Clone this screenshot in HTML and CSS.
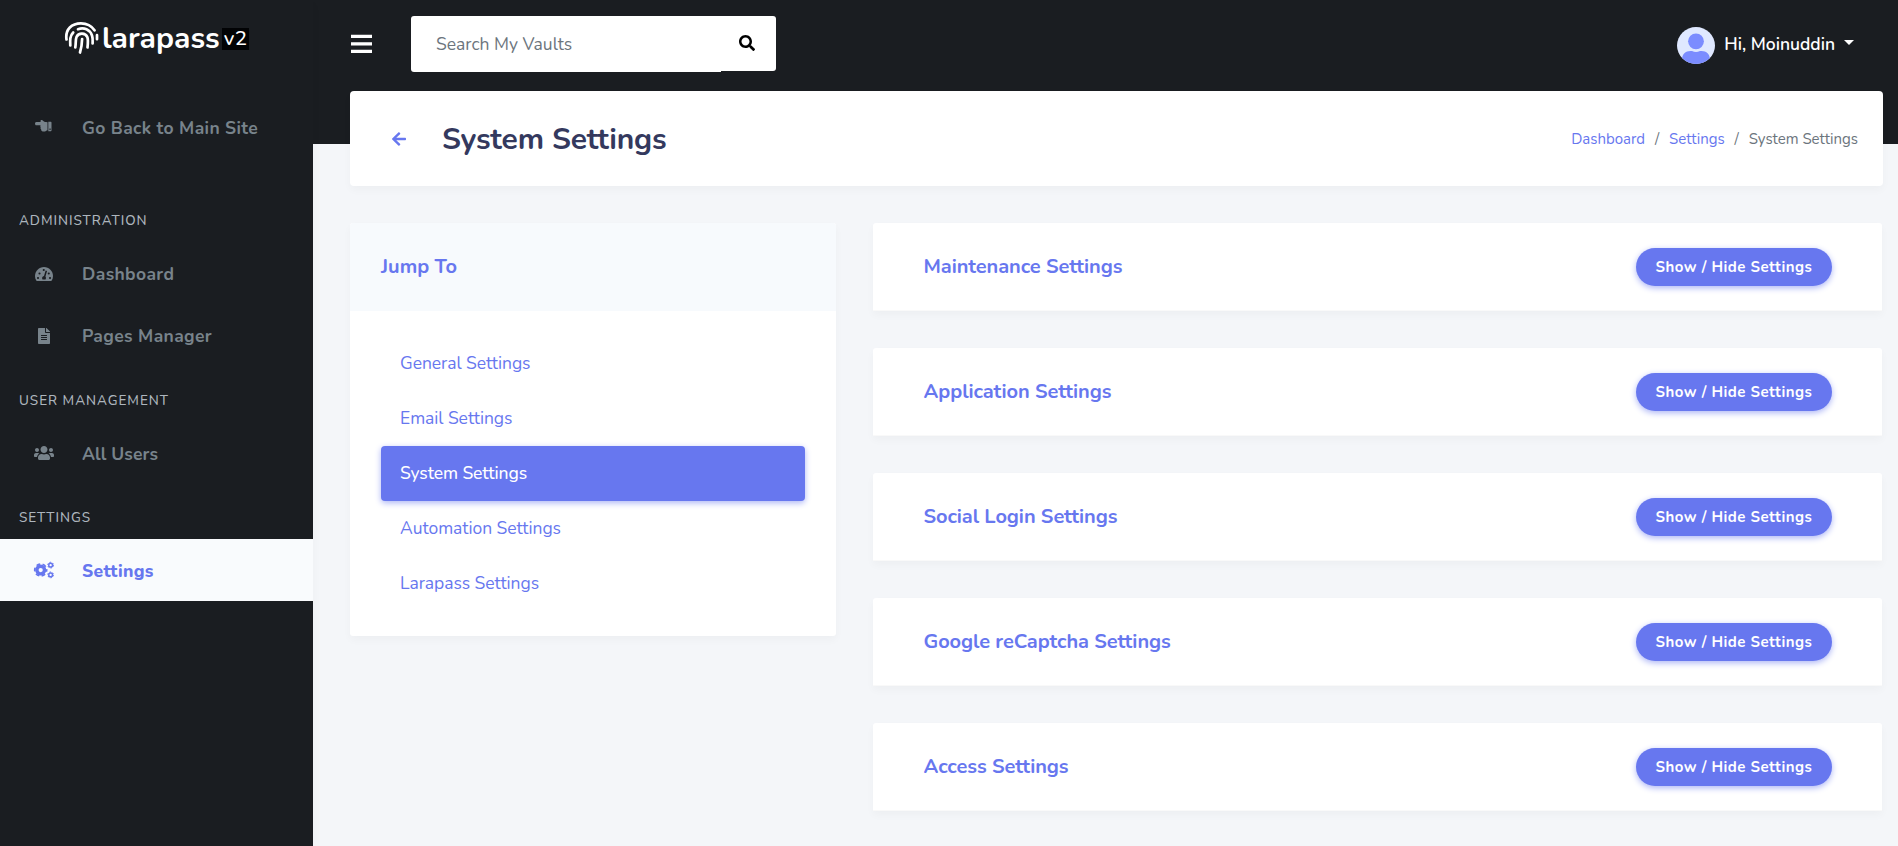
FILE: index.html
```html
<!DOCTYPE html>
<html lang="en">
<head>
<meta charset="utf-8">
<title>System Settings</title>
<link rel="stylesheet" href="styles.css">
</head>
<body>
<div class="app">
  <aside class="sidebar">
    <a class="brand">
      <svg class="brand-mark" width="36" height="34" viewBox="0 0 36 34">
        <path d="M2.500 18.500C1 8 8 2.300 17 2.300c6 0 10.500 2.500 13.500 7"/>
        <path d="M6.300 24.500C6 19 5.800 15 9.200 11.500M14 8.200c6-2.200 12 .3 14 6.300 1 3 .6 5.500.6 8M33 14.200v4"/>
        <path d="M11.300 26.500c.7-4 .1-8 1.200-10.500 2-4.500 9-4.500 10.900.3.900 2.500.5 6.500.1 10.200"/>
        <path d="M16 31.500c1.500-5 2-9 2.100-13.500"/>
      </svg>
      <span class="brand-name">larapass</span><span class="brand-tag">v2</span>
    </a>
    <nav>
      <a class="side-link back"><span class="side-icon"><svg width="17" height="13" viewBox="0 0 17 13"><path d="M1.300 2.100h4.500C5.200 1.300 5.500 0 6.600 0c.7 0 1 .4 1.700 1.100.9.900 2 1.100 4.200 1.200v7.900c-1.200.2-1.800 1.400-3.600 1.400-2 0-2.900-.7-2.700-2.100-.7-.6-.9-1.400-.5-2.100-.5-.7-.5-1.400-.1-2.100H1.300C-.4 5.300-.4 2.100 1.300 2.100z"/><path fill-rule="evenodd" d="M13.300 1.700h2.500c.4 0 .7.300.7.700v8.100c0 .4-.3.700-.7.700h-2.500zM14.500 8.600v1.300h1.100V8.600z"/></svg></span><span>Go Back to Main Site</span></a>
      <h6 class="side-head first">Administration</h6>
      <a class="side-link upper"><span class="side-icon"><svg width="18" height="16" viewBox="0 0 576 512"><path d="M288 32C129 32 0 161 0 320c0 53 14 102 39 145 6 10 16 15 27 15h444c11 0 21-5 27-15 25-43 39-92 39-145 0-159-129-288-288-288z"/><g class="cut"><circle cx="96" cy="384" r="34"/><circle cx="144" cy="240" r="34"/><circle cx="280" cy="128" r="34"/><circle cx="440" cy="240" r="34"/><circle cx="480" cy="384" r="34"/><path d="M340 145l46 15-52 178c22 25 22 65 2 94h-96c-30-50-5-108 48-112z"/></g></svg></span><span>Dashboard</span></a>
      <a class="side-link upper"><span class="side-icon"><svg width="12" height="16" viewBox="0 0 384 512"><path d="M224 136V0H24C10.700 0 0 10.700 0 24v464c0 13.300 10.700 24 24 24h336c13.300 0 24-10.700 24-24V160H248c-13.200 0-24-10.800-24-24zm64 236c0 6.600-5.400 12-12 12H108c-6.600 0-12-5.400-12-12v-8c0-6.600 5.400-12 12-12h168c6.600 0 12 5.400 12 12v8zm0-64c0 6.600-5.400 12-12 12H108c-6.600 0-12-5.400-12-12v-8c0-6.600 5.400-12 12-12h168c6.600 0 12 5.400 12 12v8zm0-72v8c0 6.600-5.400 12-12 12H108c-6.600 0-12-5.400-12-12v-8c0-6.600 5.400-12 12-12h168c6.600 0 12 5.400 12 12zm96-114.100v6.100H256V0h6.100c6.400 0 12.500 2.500 17 7l97.900 98c4.500 4.500 7 10.600 7 16.900z"/></svg></span><span>Pages Manager</span></a>
      <h6 class="side-head">User Management</h6>
      <a class="side-link"><span class="side-icon"><svg width="20" height="16" viewBox="0 0 640 512"><path d="M96 224c35.300 0 64-28.700 64-64s-28.700-64-64-64-64 28.700-64 64 28.700 64 64 64zm448 0c35.300 0 64-28.700 64-64s-28.700-64-64-64-64 28.700-64 64 28.700 64 64 64zm32 32h-64c-17.600 0-33.500 7.100-45.100 18.600 40.300 22.100 68.900 62 75.100 109.400h66c17.700 0 32-14.300 32-32v-32c0-35.300-28.700-64-64-64zm-256 0c61.900 0 112-50.100 112-112S381.900 32 320 32 208 82.100 208 144s50.100 112 112 112zm76.800 32h-8.300c-20.800 10-43.900 16-68.500 16s-47.600-6-68.500-16h-8.300C179.600 288 128 339.600 128 403.200V432c0 26.500 21.500 48 48 48h288c26.500 0 48-21.500 48-48v-28.800c0-63.600-51.600-115.200-115.200-115.200zm-223.700-13.400C161.500 263.100 145.600 256 128 256H64c-35.300 0-64 28.700-64 64v32c0 17.700 14.300 32 32 32h65.900c6.300-47.400 34.900-87.300 75.200-109.400z"/></svg></span><span class="snug">All Users</span></a>
      <h6 class="side-head">Settings</h6>
      <a class="side-link active"><span class="side-icon"><svg class="gears" width="20" height="16" viewBox="0 0 640 512"><circle cx="214" cy="256" r="123" stroke-width="110"/><circle cx="214" cy="256" r="192" stroke-width="52" pathLength="12" stroke-dasharray="1.200 .8" stroke-dashoffset=".6"/><circle cx="532" cy="100" r="60" stroke-width="46"/><circle cx="532" cy="100" r="92" stroke-width="32" pathLength="12" stroke-dasharray="1.100 .9"/><circle cx="532" cy="412" r="60" stroke-width="46"/><circle cx="532" cy="412" r="92" stroke-width="32" pathLength="12" stroke-dasharray="1.100 .9"/></svg></span><span>Settings</span></a>
    </nav>
  </aside>

  <div class="main">
    <header class="topbar">
      <svg class="bars" width="21" height="24" viewBox="0 0 448 512"><path d="M0 56h448v72H0zM0 216h448v72H0zM0 376h448v72H0z"/></svg>
      <div class="search">
        <div class="search-field">Search My Vaults</div>
        <div class="search-btn"><svg width="16" height="16" viewBox="0 0 512 512"><path d="M505 442.700L405.300 343c-4.500-4.500-10.600-7-17-7H372c27.600-35.300 44-79.700 44-128C416 93.100 322.900 0 208 0S0 93.100 0 208s93.100 208 208 208c48.300 0 92.700-16.400 128-44v16.300c0 6.400 2.500 12.500 7 17l99.700 99.700c9.400 9.400 24.600 9.400 33.900 0l28.300-28.300c9.400-9.400 9.400-24.600.1-34zM208 336c-70.700 0-128-57.200-128-128 0-70.700 57.200-128 128-128 70.700 0 128 57.200 128 128 0 70.700-57.200 128-128 128z"/></svg></div>
      </div>
      <div class="user">
        <svg class="avatar" width="38" height="37" viewBox="0 0 38 37"><defs><clipPath id="face"><ellipse cx="19" cy="18.500" rx="19" ry="18.500"/></clipPath></defs><g clip-path="url(#face)"><path fill="#dfe8ff" d="M0 0h38v37H0z"/><circle cx="19" cy="14.300" r="7.900" fill="#7b8cff"/><path fill="#7b8cff" d="M5 37v-4c0-6 3.500-9 8.500-9h1.500c2.700 1.200 5.300 1.200 8 0h1.500c5 0 8.500 3 8.500 9v4z"/></g></svg>
        <span class="user-name">Hi, Moinuddin</span>
        <span class="caret"></span>
      </div>
    </header>

    <section class="page-head">
      <svg class="arrow" width="14" height="16" viewBox="0 0 448 512"><path d="M257.500 445.100l-22.200 22.200c-9.400 9.400-24.600 9.400-33.900 0L7 273c-9.400-9.400-9.400-24.600 0-33.900L201.400 44.700c9.400-9.400 24.600-9.400 33.900 0l22.200 22.200c9.500 9.500 9.300 25-.4 34.300L136.600 216H424c13.300 0 24 10.700 24 24v32c0 13.300-10.700 24-24 24H136.600l120.500 114.800c9.800 9.300 10 24.800.4 34.300z"/></svg>
      <h1>System Settings</h1>
      <div class="crumbs"><a>Dashboard</a><i>/</i><a>Settings</a><i>/</i><span>System Settings</span></div>
    </section>

    <div class="columns">
      <section class="jump card">
        <h4>Jump To</h4>
        <nav class="pills">
          <a>General Settings</a>
          <a>Email Settings</a>
          <a class="active">System Settings</a>
          <a>Automation Settings</a>
          <a>Larapass Settings</a>
        </nav>
      </section>
      <div class="panels">
        <section class="panel card"><h4>Maintenance Settings</h4><button>Show / Hide Settings</button></section>
        <section class="panel card"><h4>Application Settings</h4><button>Show / Hide Settings</button></section>
        <section class="panel card"><h4>Social Login Settings</h4><button>Show / Hide Settings</button></section>
        <section class="panel card"><h4>Google reCaptcha Settings</h4><button>Show / Hide Settings</button></section>
        <section class="panel card"><h4>Access Settings</h4><button>Show / Hide Settings</button></section>
      </div>
    </div>
  </div>
</div>
</body>
</html>
```
FILE: styles.css
```css
* { box-sizing: border-box; }
body {
  margin: 0;
  height: 846px;
  overflow: hidden;
  font-family: Nunito, Lato, "Open Sans", sans-serif;
  font-size: 17.5px;
  color: #6c757d;
  background: linear-gradient(#1a1d21 144px, #f4f6f9 144px);
}
h1, h4, h6 { margin: 0; }
svg { display: block; flex: none; }
.app { display: flex; height: 846px; }

.sidebar {
  width: 313px;
  flex: none;
  background: #1a1d21;
  box-shadow: 0 5px 10px rgba(0, 0, 0, .03);
}
.brand { display: flex; height: 96px; padding: 21px 0 0 64px; color: #fff; }
.brand-mark { fill: none; stroke: #fff; stroke-width: 2.700; stroke-linecap: round; }
.brand-name { margin-left: 2px; width: 118px; font-size: 30px; font-weight: 700; line-height: 36px; letter-spacing: 0; }
.brand-tag { margin: 7px 0 0 2px; width: 27px; height: 22px; background: #020305; font-size: 20.500px; font-weight: 500; line-height: 21px; letter-spacing: .4px; text-align: center; }
.side-link { display: flex; align-items: center; height: 62px; padding-top: 1px; color: #78838b; font-weight: 700; letter-spacing: .36px; white-space: nowrap; }
.side-link.upper { padding-top: 0; }
.side-link.back { margin-bottom: 30px; }
.side-icon { width: 87px; margin: -1px -5px 0 0; display: flex; justify-content: center; }
.back .side-icon { margin-top: -2px; }
.side-icon svg { fill: #78838b; }
.side-icon .cut { fill: #1a1d21; }
.snug { letter-spacing: .1px; }
.side-link.active { background: #f9fbfd; color: #6777ef; font-weight: 800; letter-spacing: .35px; }
.side-icon .gears { fill: none; stroke: #6777ef; overflow: visible; }
.side-head { height: 55px; padding: 11px 0 0 19px; line-height: 45px; font-size: 13.500px; font-weight: 500; letter-spacing: .97px; text-transform: uppercase; color: #adb5bd; white-space: nowrap; }
.side-head.first { padding-top: 10px; }

.main { flex: 1; padding: 0 15px 0 37px; }
.topbar { display: flex; align-items: center; height: 91px; padding-bottom: 4px; }
.bars { margin-left: 1px; fill: #fff; }
.search { display: flex; align-items: flex-start; margin-left: 39px; }
.search-field { width: 310px; height: 56px; padding-left: 25px; background: #fff; border-radius: 3px 0 0 3px; line-height: 56px; }
.search-btn { width: 55px; height: 55px; background: #fff; border-radius: 0 3px 3px 0; display: flex; align-items: center; padding-left: 18px; }
.user { display: flex; align-items: center; margin-left: auto; padding-right: 29px; color: #fff; font-weight: 600; }
.avatar { margin: 3px 9px 0 0; }
.caret { width: 10px; margin-left: 9px; border: 5px solid transparent; border-top-color: #fff; border-bottom: 0; margin-top: -3px; }

.page-head { display: flex; align-items: center; height: 95px; padding: 0 25px 0 42px; background: #fff; border-radius: 4px; box-shadow: 0 4px 8px rgba(0, 0, 0, .03); }
.arrow { fill: #6777ef; }
.page-head h1 { margin-left: 36px; padding-top: 2px; font-size: 30px; font-weight: 700; letter-spacing: -.12px; color: #34395e; line-height: 36px; }
.crumbs { display: flex; margin-left: auto; font-size: 15px; }
.crumbs a { color: #6777ef; }
.crumbs i { font-style: normal; width: 24px; text-align: center; }

.columns { display: flex; gap: 37px; align-items: flex-start; margin-top: 37px; padding-right: 1px; }
.card { background: #fff; border-radius: 3px; box-shadow: 0 4px 8px rgba(0, 0, 0, .03); }
.card h4 { font-size: 20px; font-weight: 700; color: #6777ef; white-space: nowrap; }
.jump { width: 486px; flex: none; height: 413px; }
.jump h4 { height: 88px; padding-left: 31px; line-height: 88px; background: #f7fafd; border-radius: 3px 3px 0 0; }
.pills { padding: 25px 31px; }
.pills a { display: block; height: 55px; padding-left: 19px; line-height: 55px; letter-spacing: -.05px; color: #6777ef; border-radius: 4px; }
.pills .active { background: #6777ef; color: #fff; box-shadow: 0 2px 6px #acb5f6; font-weight: 500; letter-spacing: -.1px; }
.panels { flex: 1; display: grid; gap: 37px; }
.panel { display: flex; align-items: center; justify-content: space-between; height: 88px; padding: 0 50px 0 50.500px; border-bottom: 1px solid #f9f9f9; border-radius: 3px 3px 0 0; }
.panel h4 { letter-spacing: -.08px; }
.panel button { width: 196px; height: 38px; margin-top: 1px; padding: 0; border: 0; border-radius: 19px; background: #6777ef; color: #fff; font: 700 15px Nunito, Lato, "Open Sans", sans-serif; letter-spacing: .5px; box-shadow: 0 2px 6px #acb5f6; white-space: nowrap; }
```
